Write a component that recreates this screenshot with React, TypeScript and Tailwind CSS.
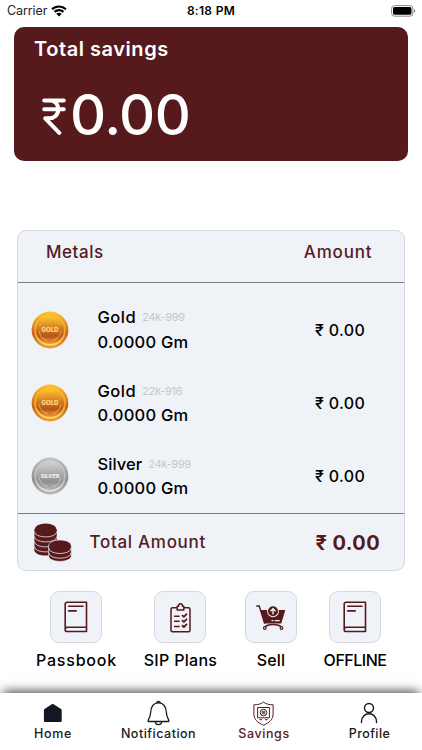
import type { ReactNode } from "react";

const MAROON = "#561a1d";

function Wifi() {
  return (
    <svg width="16" height="12" viewBox="0 0 16 12" fill="#000">
      <path d="M8 .4C5 .4 2.300 1.500.3 3.400l1.500 1.700A9 9 0 0 1 8 2.600a9 9 0 0 1 6.200 2.500l1.500-1.700A11.200 11.200 0 0 0 8 .4Z" />
      <path d="M8 4.100c-2 0-3.800.8-5.200 2l1.500 1.700A5.500 5.500 0 0 1 8 6.300c1.400 0 2.700.6 3.700 1.500l1.500-1.700A7.700 7.700 0 0 0 8 4.100Z" />
      <path d="M8 7.700c-1 0-2 .4-2.700 1L8 11.500l2.700-2.800c-.7-.6-1.700-1-2.700-1Z" />
    </svg>
  );
}

function Battery() {
  return (
    <svg width="26" height="12" viewBox="0 0 26 12">
      <rect x=".6" y=".6" width="21.300" height="10.600" rx="3" fill="none" stroke="#888" strokeWidth="1" />
      <rect x="2" y="2" width="18.500" height="7.800" rx="1.700" fill="#000" />
      <path d="M23 4.200c1 .3 1.300 1 1.300 1.700s-.3 1.400-1.300 1.700Z" fill="#888" />
    </svg>
  );
}

function Rupee() {
  return (
    <svg width="24" height="37" viewBox="0 0 24 37" fill="none" stroke="#fff" strokeWidth="4" strokeLinecap="round" strokeLinejoin="round">
      <path d="M2.200 2.500H21.800M2.200 11.300H21.800M2.200 2.500H8.500C13 2.500 16.300 6.500 16.300 11.200C16.300 17 12 20.300 7 20.300H3.200L17.300 34.800" />
    </svg>
  );
}

function Coin({ silver = false }: { silver?: boolean }) {
  const id = silver ? "silver" : "gold";
  const c = silver
    ? ["#c4c4c4", "#8d8d8d", "#cfcfcf", "#8f8f8f", "#b8b8b8", "#e8e8e8"]
    : ["#ffc52b", "#c4641c", "#ffc32d", "#b8521a", "#f0a02c", "#ffe07a"];
  return (
    <svg width="38" height="38" viewBox="0 0 38 38">
      <defs>
        <linearGradient id={id + "Rim"} x1="0" y1="0" x2="0" y2="1">
          <stop offset="0" stopColor={c[0]} />
          <stop offset=".6" stopColor={c[1]} />
          <stop offset="1" stopColor={c[4]} />
        </linearGradient>
        <linearGradient id={id + "Ring"} x1="0" y1="0" x2="0" y2="1">
          <stop offset="0" stopColor={c[2]} />
          <stop offset=".6" stopColor={c[4]} />
          <stop offset="1" stopColor={c[5]} />
        </linearGradient>
        <linearGradient id={id + "Face"} x1="0" y1="0" x2="0" y2="1">
          <stop offset="0" stopColor={c[2]} />
          <stop offset=".72" stopColor={c[3]} />
          <stop offset="1" stopColor={c[4]} />
        </linearGradient>
      </defs>
      <circle cx="19" cy="19" r="18.400" fill={`url(#${id}Rim)`} />
      <circle cx="19" cy="19" r="15.800" fill={`url(#${id}Ring)`} />
      <circle cx="19" cy="19" r="14" fill={`url(#${id}Face)`} />
      <path d="M8 20a11.300 11.300 0 0 0 8.500 9.500M30 20a11.300 11.300 0 0 1-8.500 9.500" fill="none" stroke={c[5]} strokeWidth="1.100" opacity=".45" />
      <path d="M8.500 15a11 11 0 0 1 21 0" fill="none" stroke={c[5]} strokeWidth=".6" opacity=".35" />
      <text x="19" y="20.600" textAnchor="middle" fontFamily="Inter, sans-serif" fontWeight="800" fontSize={silver ? 4.8 : 5.6} textLength={silver ? 18.5 : 17} lengthAdjust="spacingAndGlyphs" fill={silver ? "#ededed" : "#ffe084"}>
        {silver ? "SILVER" : "GOLD"}
      </text>
    </svg>
  );
}

function CoinStacks() {
  const line = { stroke: "#f3e4e5", strokeWidth: 0.8, fill: "none" };
  return (
    <svg width="38" height="39" viewBox="0 0 38 39">
      <path d="M.4 6.700v20.500c0 3 5 5.300 11.200 5.300s11.200-2.300 11.200-5.300V6.700Z" fill={MAROON} />
      <ellipse cx="11.600" cy="6.900" rx="11.200" ry="6.400" fill={MAROON} />
      {[0, 5, 10, 15].map((y) => (
        <path key={y} {...line} d={`M.4 ${8.5 + y}c0 7.200 22.400 7.200 22.400 0`} />
      ))}
      <path d="M14.600 23v10c0 3 5 5.400 11.300 5.400S37.300 36 37.300 33V23c0-8-22.700-8-22.700 0Z" fill={MAROON} stroke="#eff2f7" strokeWidth=".7" />
      <path {...line} d="M14.800 25c0 7.300 22.300 7.300 22.300 0M14.800 29.700c0 7.300 22.300 7.300 22.300 0" />
    </svg>
  );
}

function Book() {
  return (
    <svg width="24" height="32" viewBox="0 0 24 32" fill="none" stroke={MAROON} strokeWidth="1.600" strokeLinecap="round" strokeLinejoin="round">
      <path d="M3 1.300H22.500V30.500H3a1.800 1.800 0 0 1-1.800-1.800V3.100A1.800 1.800 0 0 1 3 1.300ZM1.400 27.500 3 26.200H22.500M4.700 5.300H19M4.700 9.900H12.200" />
    </svg>
  );
}

function Checklist() {
  return (
    <svg width="21" height="31" viewBox="0 0 21 31" fill="none" stroke={MAROON} strokeWidth="1.500" strokeLinecap="round" strokeLinejoin="round">
      <path d="M6.500 5.700H2.500a1.500 1.500 0 0 0-1.500 1.500V28.300a1.500 1.500 0 0 0 1.500 1.500H18.500a1.500 1.500 0 0 0 1.500-1.500V7.200a1.500 1.500 0 0 0-1.500-1.500H14.500" />
      <path d="M7.200 8V4.300H8.600a2 2 0 1 1 3.800 0h1.400V8Z" />
      <path d="M4.600 14.300h4.500M4.600 19.300h4.500M4.600 24.600h4.500" />
      <path strokeWidth="1.800" d="m12.500 13.600 1.400 1.200 2.600-2.600m-4 6.500 1.400 1.200 2.600-2.600m-4 6.500 1.400 1.200 2.600-2.600" />
    </svg>
  );
}

function Cart() {
  return (
    <svg width="30" height="27" viewBox="0 0 30 27">
      <path d="M.8 2H3.200L8.500 19" fill="none" stroke={MAROON} strokeWidth="1.400" strokeLinecap="round" />
      <path d="M4.700 6H29.300L25.300 19.400H8.200Z" fill={MAROON} />
      <circle cx="17" cy="7.300" r="5.900" fill="#eff2f7" />
      <circle cx="17" cy="7.300" r="5" fill={MAROON} />
      <path d="M17 10.500V4.700m-2.500 2.500L17 4.600l2.500 2.600" fill="none" stroke="#fff" strokeWidth="1.300" />
      <path d="M15.500 16.700h2M18.700 16.700h5" stroke="#f5eced" strokeWidth="1.200" />
      <path d="M8.300 23.500c3.500-4 14-4 17.500 0" fill="none" stroke={MAROON} strokeWidth="1.700" />
      <circle cx="8.800" cy="24" r="1.300" fill="#fff" stroke={MAROON} strokeWidth="1.200" />
      <circle cx="25.500" cy="24" r="1.300" fill="#fff" stroke={MAROON} strokeWidth="1.200" />
    </svg>
  );
}

function Home() {
  return (
    <svg width="20" height="24" viewBox="0 0 20 24">
      <path d="M.9 9.200a1.600 1.600 0 0 1 .6-1.200L8.800 3.200a1.600 1.600 0 0 1 1.800 0L18 8c.5.300.7.700.7 1.200V20a1 1 0 0 1-1 1H1.900a1 1 0 0 1-1-1Z" fill="#111823" />
    </svg>
  );
}

function Bell() {
  return (
    <svg width="23" height="26" viewBox="0 0 23 26" fill="none" stroke="#17191d" strokeWidth="1.300" strokeLinejoin="round">
      <path d="M9.500 2.700a2.200 2.200 0 0 1 4 0M1.200 21.500c-.7-2.200 2-2.700 2.300-8.200C3.800 6.500 6.200 2.900 11.500 2.900s7.700 3.600 8 10.400c.3 5.500 3 6 2.300 8.200Z" />
      <path d="M8.300 21.700c.4 4 6 4 6.400 0" />
    </svg>
  );
}

function SafeShield() {
  return (
    <svg width="21" height="25" viewBox="0 0 21 25" fill="none" stroke={MAROON} strokeWidth="1" strokeLinejoin="round">
      <path d="M10.500 1C8.500 3 4.500 3.800.9 3.800V13c0 5.500 4 8.900 9.600 11.200 5.600-2.300 9.600-5.700 9.600-11.200V3.800C16.500 3.800 12.500 3 10.500 1Z" />
      <rect x="4.600" y="6.500" width="11.800" height="10.300" />
      <circle cx="10.500" cy="11.600" r="3.300" />
      <circle cx="10.500" cy="11.600" r="1.300" />
      <path strokeWidth=".6" d="m8.200 9.300 4.600 4.600m0-4.600-4.600 4.600" />
      <path d="M6.500 18.700h2.500M12 18.700h2.500" />
    </svg>
  );
}

function Person() {
  return (
    <svg width="18" height="22" viewBox="0 0 18 22" fill="none" stroke="#17191d" strokeWidth="1.400" strokeLinecap="round">
      <circle cx="9" cy="6" r="4.500" />
      <path d="M1.500 20.500v-1.300a7.500 7.500 0 0 1 15 0v1.300" />
    </svg>
  );
}

type Metal = { name: string; purity: string; tracking: string; silver?: boolean };

const metals: Metal[] = [
  { name: "Gold", purity: "24k-999", tracking: "tracking-[0.5px]" },
  { name: "Gold", purity: "22k-916", tracking: "tracking-[0.5px]" },
  { name: "Silver", purity: "24k-999", tracking: "tracking-[0.05px]", silver: true },
];

function MetalRow({ name, purity, tracking, silver }: Metal) {
  return (
    <div className="flex h-[73.5px] items-center whitespace-nowrap">
      <div className="ml-[13px] w-[66.5px] shrink-0">
        <Coin silver={silver} />
      </div>
      <div className="w-[217.5px]">
        <div className="flex h-6 items-center">
          <span className={`text-[16.5px] font-medium ${tracking}`}>{name}</span>
          <span className="ml-[6px] text-[11px] tracking-[-0.3px] text-[#c6c8cc]">{purity}</span>
        </div>
        <div className="h-6 text-[16.500px] leading-6 font-medium tracking-[0.25px]">0.0000 Gm</div>
      </div>
      <span className="text-[16px] font-medium tracking-[0.35px]">₹ 0.00</span>
    </div>
  );
}

function Action({ label, icon, width, tracking }: { label: string; icon: ReactNode; width: string; tracking: string }) {
  return (
    <div className={`flex flex-col items-center whitespace-nowrap ${width}`}>
      <div className="flex h-[52px] w-[52px] items-center justify-center rounded-[9px] border border-[#d5d9df] bg-[#eff2f7]">{icon}</div>
      <span className={`mt-[5px] pl-[1px] text-[16px] leading-6 font-medium ${tracking}`}>{label}</span>
    </div>
  );
}

function Tab({ label, icon, width, active, tracking }: { label: string; icon: ReactNode; width: string; active?: boolean; tracking: string }) {
  return (
    <div className={`flex flex-col items-center whitespace-nowrap ${width} ${active ? "text-[#561a1d]" : "text-[#17191d]"}`}>
      <div className="flex h-[28px] items-center justify-center">{icon}</div>
      <span className={`pl-[1px] text-[12.5px] leading-[14px] font-medium ${tracking}`}>{label}</span>
    </div>
  );
}

export default function App() {
  return (
    <div className="flex h-[750px] w-[422px] flex-col overflow-hidden bg-white font-['Inter',sans-serif] text-black">
      <header className="grid h-[27px] shrink-0 grid-cols-3 items-center pb-[5px]">
        <div className="flex items-center gap-[4px] pl-[7px] text-[12.5px] leading-4 text-[#222]">
          <span className="tracking-[-0.1px]">Carrier</span>
          <Wifi />
        </div>
        <span className="text-center text-[12px] leading-4 font-semibold tracking-[0.3px]">8:18 PM</span>
        <div className="flex justify-end pr-[5px]">
          <Battery />
        </div>
      </header>

      <section className="mr-[14px] ml-[13.500px] h-[134px] shrink-0 rounded-[10px] bg-[#561a1d] text-white">
        <h1 className="pt-[8px] pl-[20.5px] text-[20px] leading-[28px] font-semibold tracking-[0.55px]">Total savings</h1>
        <div className="mt-[23px] flex items-center pl-[28.5px]">
          <div className="mt-[3px]">
            <Rupee />
          </div>
          <span className="mt-px ml-[4px] text-[56px] leading-[56px] font-medium tracking-[-0.5px]">0.00</span>
        </div>
      </section>

      <section className="mt-[69px] mr-[17px] ml-[17px] flex h-[341px] shrink-0 flex-col rounded-[9px] border border-[#d5d9df] bg-[#eff2f7]">
        <div className="flex h-[52px] shrink-0 justify-between border-b border-[#777b82] pt-[8px] pr-[31.5px] pl-[28px] text-[17px] leading-[26px] font-medium text-[#561a1d]">
          <span className="tracking-[0.55px]">Metals</span>
          <span className="tracking-[0.85px]">Amount</span>
        </div>
        <div className="flex h-[231px] shrink-0 flex-col border-b border-[#777b82] pt-[10px]">
          {metals.map((m) => (
            <MetalRow key={m.name + m.purity} {...m} />
          ))}
        </div>
        <div className="flex flex-1 items-center pl-[16px] text-[#561a1d]">
          <CoinStacks />
          <span className="mt-[2px] ml-[17.5px] w-[226px] text-[17px] font-medium tracking-[0.7px]">Total Amount</span>
          <span className="mt-[2px] text-[20px] font-bold tracking-[0.4px]">₹ 0.00</span>
        </div>
      </section>

      <section className="mt-[20px] flex h-[88px] shrink-0 pl-[26px]">
        <Action label="Passbook" icon={<Book />} width="w-[100px]" tracking="tracking-[0.8px]" />
        <Action label="SIP Plans" icon={<Checklist />} width="w-[108px]" tracking="tracking-[0.3px]" />
        <Action label="Sell" icon={<Cart />} width="w-[73px]" tracking="tracking-[0.2px]" />
        <Action label="OFFLINE" icon={<Book />} width="w-[95px]" tracking="tracking-[-0.5px]" />
      </section>

      <nav className="mt-auto flex h-[57px] shrink-0 bg-white pt-[6px] shadow-[0_-5px_10px_-3px_rgba(0,0,0,0.7)]">
        <Tab label="Home" icon={<Home />} width="w-[105px]" tracking="tracking-[0.7px]" />
        <Tab label="Notification" icon={<Bell />} width="w-[106px]" tracking="tracking-[0.5px]" />
        <Tab label="Savings" icon={<SafeShield />} width="w-[105px]" tracking="tracking-[0.6px]" active />
        <Tab label="Profile" icon={<Person />} width="w-[106px]" tracking="tracking-[0.4px]" />
      </nav>
    </div>
  );
}
